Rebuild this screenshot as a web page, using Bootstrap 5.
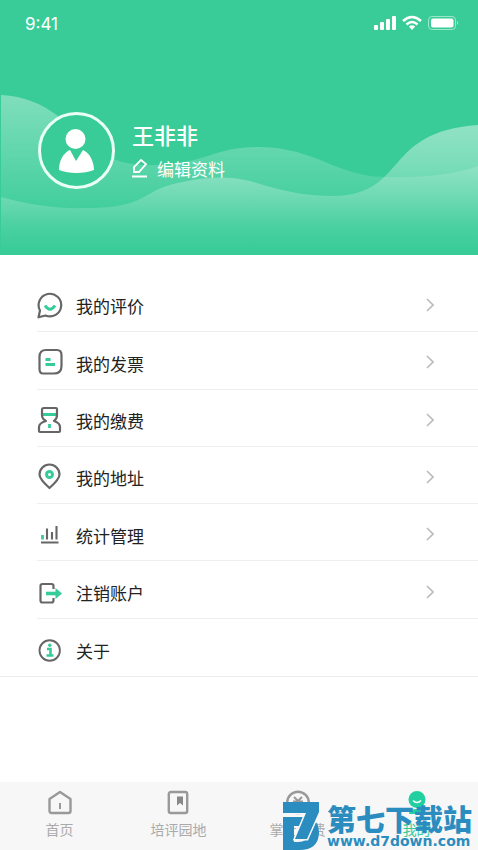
<!DOCTYPE html>
<html lang="zh-CN">
<head>
<meta charset="utf-8">
<meta name="viewport" content="width=device-width, initial-scale=1">
<title>我的</title>
<link href="https://cdn.jsdelivr.net/npm/bootstrap@5.3.0/dist/css/bootstrap.min.css" rel="stylesheet">
<style>
:root{--brand:#39cc98;--ink:#222;--mint:#35cc99}
body{font-family:"Noto Sans CJK SC","Liberation Sans",sans-serif;color:var(--ink);background:#fff}
.hero{background:var(--brand);height:255px}
.waves{z-index:0}
.front{z-index:1}
.status{padding:12px 18px 0 25px;height:36px}
.clock{font:17px/24px Inter,"Liberation Sans",sans-serif}
.profile{padding:76px 38px 0;gap:16px}
.avatar{width:77px;height:77px;border:3px solid #e9fff7;background:var(--brand)}
.person{font-size:22px;line-height:32px;font-weight:500;padding-left:1px}
.who{padding-top:6px}
.edit{font-size:17px;line-height:26px;gap:8px;margin-top:6px}
.menu{padding-top:20px;height:422px;grid-auto-rows:1fr;border-bottom:1px solid #ededed}
.entry{height:100%;margin-left:37px;border-bottom:1px solid #eee;padding:4px 44px 0 0;font-size:17px;color:var(--ink)}
.entry span{padding-top:2px}
.menu li:last-child .entry{border-bottom:0}
.entry svg:first-child{width:26px;height:28px;margin-right:13px}
.tabs{background:#f7f7f7;height:68px;padding-right:2px}
.tab{font-size:14px;line-height:20px;color:#aaa;padding-top:7px;gap:4px}
.tab.active{color:var(--mint)}
.stamp{right:6px;bottom:0;color:#2b8dbf;z-index:2;pointer-events:none}
.stamp-title{font-size:29px;line-height:30px;font-weight:900}
.stamp-url{font-family:"DejaVu Sans",sans-serif;font-size:14px;line-height:17px;font-weight:700}
</style>
</head>
<body>
<div class="d-flex flex-column min-vh-100">
<header class="hero position-relative text-white">
  <svg class="waves position-absolute top-0 start-0 w-100 h-100" viewBox="0 0 478 255" preserveAspectRatio="none" aria-hidden="true">
    <defs>
      <linearGradient id="back" gradientUnits="userSpaceOnUse" x1="0" y1="95" x2="0" y2="225"><stop stop-color="#fff" stop-opacity=".36"/><stop offset="1" stop-color="#fff" stop-opacity="0"/></linearGradient>
      <linearGradient id="fore" gradientUnits="userSpaceOnUse" x1="0" y1="125" x2="0" y2="250"><stop stop-color="#fff" stop-opacity=".44"/><stop offset=".3" stop-color="#fff" stop-opacity=".34"/><stop offset="1" stop-color="#fff" stop-opacity="0"/></linearGradient>
    </defs>
    <path fill="url(#back)" d="M1 95C24 96 42 104 58 116C80 134 94 154 122 162C147 168 180 165 208 156C226 150 238 147 260 147C318 148 338 178 388 177C420 178 455 175 478 166V255H1Z"/>
    <path fill="url(#fore)" d="M1 197C30 205 58 209 88 208C148 208 140 191 178 183C202 177 226 175 250 181C280 190 302 196 334 196C409 194 381 132 478 125V255H1Z"/>
  </svg>
  <div class="front position-relative">
    <div class="status d-flex justify-content-between">
      <span class="clock">9:41</span>
      <svg width="86" height="20" viewBox="0 0 86 20" fill="#fff" aria-label="状态">
        <rect x="0" y="13" width="4" height="5" rx="1"/><rect x="6" y="10" width="4" height="8" rx="1"/><rect x="12" y="7" width="4" height="11" rx="1"/><rect x="18" y="4" width="4" height="14" rx="1"/>
        <g fill="none" stroke="#fff" stroke-width="2.6"><path d="M29 9Q38 1 47 9M32.500 12.500Q38 7.500 43.500 12.500"/></g><path d="M38 18L34.800 14.600Q38 12 41.200 14.600Z"/>
        <rect x="54.500" y="4.500" width="27" height="13" rx="3.500" fill="none" stroke="#fff" stroke-opacity=".5"/><rect x="57" y="6.500" width="22.500" height="9" rx="2"/><path d="M83 9q2.500 2 0 4z" opacity=".5"/>
      </svg>
    </div>
    <div class="profile d-flex">
      <div class="avatar rounded-circle flex-shrink-0 d-flex align-items-center justify-content-center">
        <svg width="71" height="71" viewBox="0 0 71 71" fill="#fff" aria-hidden="true"><circle cx="34.500" cy="24" r="10"/><path d="M29 35L35 46L42 35C49 38 53 47 53 55C43 59 28 59 18 55C18 46 22 38 29 35Z"/></svg>
      </div>
      <div class="who">
        <div class="person">王非非</div>
        <a href="#" class="edit d-flex align-items-center text-white text-decoration-none"><svg width="18" height="22" viewBox="0 0 18 22" fill="none" stroke="#fff" stroke-width="1.800" aria-hidden="true"><path d="M3 14V9L10 2L15 6L8 14ZM1 18.500H16"/></svg>编辑资料</a>
      </div>
    </div>
  </div>
</header>
<main class="flex-grow-1">
<ul class="menu list-unstyled mb-0 d-grid">
<li><a href="#" class="entry d-flex align-items-center text-decoration-none"><svg viewBox="0 0 26 28" fill="none" stroke="#666" stroke-width="2.200" stroke-linejoin="round" aria-hidden="true"><path d="M1.500 26.300L3 19.500A11.300 11.300 0 1 1 8.500 24.500Z"/><path d="M8 14.500Q13 22 18 14.500" stroke="#35cc99" stroke-width="3"/></svg><span class="flex-grow-1">我的评价</span><svg width="8" height="16" viewBox="0 0 8 16" fill="none" stroke="#bbb" stroke-width="1.600" aria-hidden="true"><path d="M1 2L7 8L1 14"/></svg></a></li>
<li><a href="#" class="entry d-flex align-items-center text-decoration-none"><svg viewBox="0 0 26 28" fill="none" stroke="#666" stroke-width="2.200" aria-hidden="true"><path d="M9 2H20Q24.500 2 24.500 7V18Q24.500 25.500 17 25.500H6Q2.500 25.500 2.500 21V9Q2.500 2 9 2Z"/><path d="M8.500 11.500H13.500M8.500 16.500H18" stroke="#35cc99" stroke-width="2.800"/></svg><span class="flex-grow-1">我的发票</span><svg width="8" height="16" viewBox="0 0 8 16" fill="none" stroke="#bbb" stroke-width="1.600" aria-hidden="true"><path d="M1 2L7 8L1 14"/></svg></a></li>
<li><a href="#" class="entry d-flex align-items-center text-decoration-none"><svg viewBox="0 0 26 28" fill="none" stroke="#666" stroke-width="2.200" stroke-linejoin="round" aria-hidden="true"><path d="M6 8.500H20M12.500 18V22" stroke="#35cc99" stroke-width="2.800"/><path d="M7 2H19Q20 2 20 3V9Q20 13 17 15Q23 17 23 21V25Q23 26 22 26H3Q2 26 2 25V21Q2 17 9 15Q5 13 5 9V4Q5 2 7 2Z"/></svg><span class="flex-grow-1">我的缴费</span><svg width="8" height="16" viewBox="0 0 8 16" fill="none" stroke="#bbb" stroke-width="1.600" aria-hidden="true"><path d="M1 2L7 8L1 14"/></svg></a></li>
<li><a href="#" class="entry d-flex align-items-center text-decoration-none"><svg viewBox="0 0 26 28" fill="none" stroke="#666" stroke-width="2.200" stroke-linejoin="round" aria-hidden="true"><path d="M12.500 25C8 21 2.500 16 2.500 11.500A10 10 0 0 1 22.500 11.500C22.500 16 17 21 12.500 25Z"/><circle cx="12.500" cy="11.500" r="3" stroke="#35cc99" stroke-width="3"/></svg><span class="flex-grow-1">我的地址</span><svg width="8" height="16" viewBox="0 0 8 16" fill="none" stroke="#bbb" stroke-width="1.600" aria-hidden="true"><path d="M1 2L7 8L1 14"/></svg></a></li>
<li><a href="#" class="entry d-flex align-items-center text-decoration-none"><svg viewBox="0 0 26 28" fill="none" stroke="#666" stroke-width="2.100" aria-hidden="true"><path d="M4 22.500H21.500M10 19.500V8.500M15 19.500V12M19.500 19.500V6"/><path d="M5.500 19.500V15" stroke="#35cc99" stroke-width="2.800"/></svg><span class="flex-grow-1">统计管理</span><svg width="8" height="16" viewBox="0 0 8 16" fill="none" stroke="#bbb" stroke-width="1.600" aria-hidden="true"><path d="M1 2L7 8L1 14"/></svg></a></li>
<li><a href="#" class="entry d-flex align-items-center text-decoration-none"><svg viewBox="0 0 26 28" fill="none" stroke="#666" stroke-width="2.200" aria-hidden="true"><path d="M16.500 11V8Q16.500 6 14.500 6H5.500Q3.500 6 3.500 8V22.500Q3.500 24.500 5.500 24.500H14.500Q16.500 24.500 16.500 22.500V20"/><path d="M9 15.500H20" stroke="#35cc99" stroke-width="3.600"/><path d="M18.500 10L25 15.500L18.500 21Z" fill="#35cc99" stroke="none"/></svg><span class="flex-grow-1">注销账户</span><svg width="8" height="16" viewBox="0 0 8 16" fill="none" stroke="#bbb" stroke-width="1.600" aria-hidden="true"><path d="M1 2L7 8L1 14"/></svg></a></li>
<li><a href="#" class="entry d-flex align-items-center text-decoration-none"><svg viewBox="0 0 26 28" fill="none" stroke="#666" stroke-width="1.900" aria-hidden="true"><circle cx="12.700" cy="15.500" r="10.200"/><path d="M10 14H13.500V20.500M9.500 20.500H16.500" stroke="#35cc99" stroke-width="2.600"/><circle cx="12.800" cy="10.300" r="1.700" fill="#35cc99" stroke="none"/></svg><span class="flex-grow-1">关于</span></a></li>
</ul>
</main>
<footer class="position-relative">
<nav class="tabs row g-0 text-center" aria-label="主导航">
<a href="#" class="tab col d-flex flex-column align-items-center text-decoration-none"><svg width="26" height="26" viewBox="0 0 26 26" fill="none" stroke="#999" stroke-width="2.400" stroke-linejoin="round" aria-hidden="true"><path d="M2.500 10L13 3L23.500 10V22Q23.500 24 21.500 24H4.500Q2.500 24 2.500 22Z"/><path d="M13 14V20" stroke-width="2"/></svg>首页</a>
<a href="#" class="tab col d-flex flex-column align-items-center text-decoration-none"><svg width="26" height="26" viewBox="0 0 26 26" fill="none" stroke="#999" stroke-width="2.400" aria-hidden="true"><rect x="2.800" y="3" width="18.400" height="21" rx="2"/><path d="M11 7.500H17V16.500L14 14L11 16.500Z" fill="#888" stroke="none"/></svg>培评园地</a>
<a href="#" class="tab col d-flex flex-column align-items-center text-decoration-none"><svg width="26" height="26" viewBox="0 0 26 26" fill="none" stroke="#999" stroke-width="2.400" aria-hidden="true"><circle cx="13" cy="13.500" r="10.800"/><path d="M9 8L13 12L17 8M8 12.500H18M8 16H18M13 12V20" stroke-width="2"/></svg>掌上缴费</a>
<a href="#" class="tab active col d-flex flex-column align-items-center text-decoration-none" aria-current="page"><svg width="26" height="26" viewBox="0 0 26 26" fill="#22cfa0" aria-hidden="true"><circle cx="13" cy="10.500" r="8.500"/><path d="M5 25Q5 20 13 20Q21 20 21 25Z"/><path d="M9 11.500Q13 15.500 17 11.500" fill="none" stroke="#fff" stroke-width="1.600"/></svg>我的</a>
</nav>
<div class="stamp position-absolute d-flex align-items-end">
<svg width="40" height="48" viewBox="0 0 40 48" fill="#2b8dbf" aria-hidden="true"><path fill-rule="evenodd" d="M0 15H18Q36 15 36 30Q36 48 16 48H0ZM11 24V40H15Q25 40 25 31V24Z"/><path d="M0 0H36V10L24 37H12L23 11H0Z" stroke="#f7f7f7" stroke-width="3" paint-order="stroke"/></svg>
<div class="ms-1"><div class="stamp-title">第七下载站</div><div class="stamp-url">www.d7down.com</div></div>
</div>
</footer>
</div>
<script src="https://cdn.jsdelivr.net/npm/bootstrap@5.3.0/dist/js/bootstrap.bundle.min.js"></script>
</body>
</html>
